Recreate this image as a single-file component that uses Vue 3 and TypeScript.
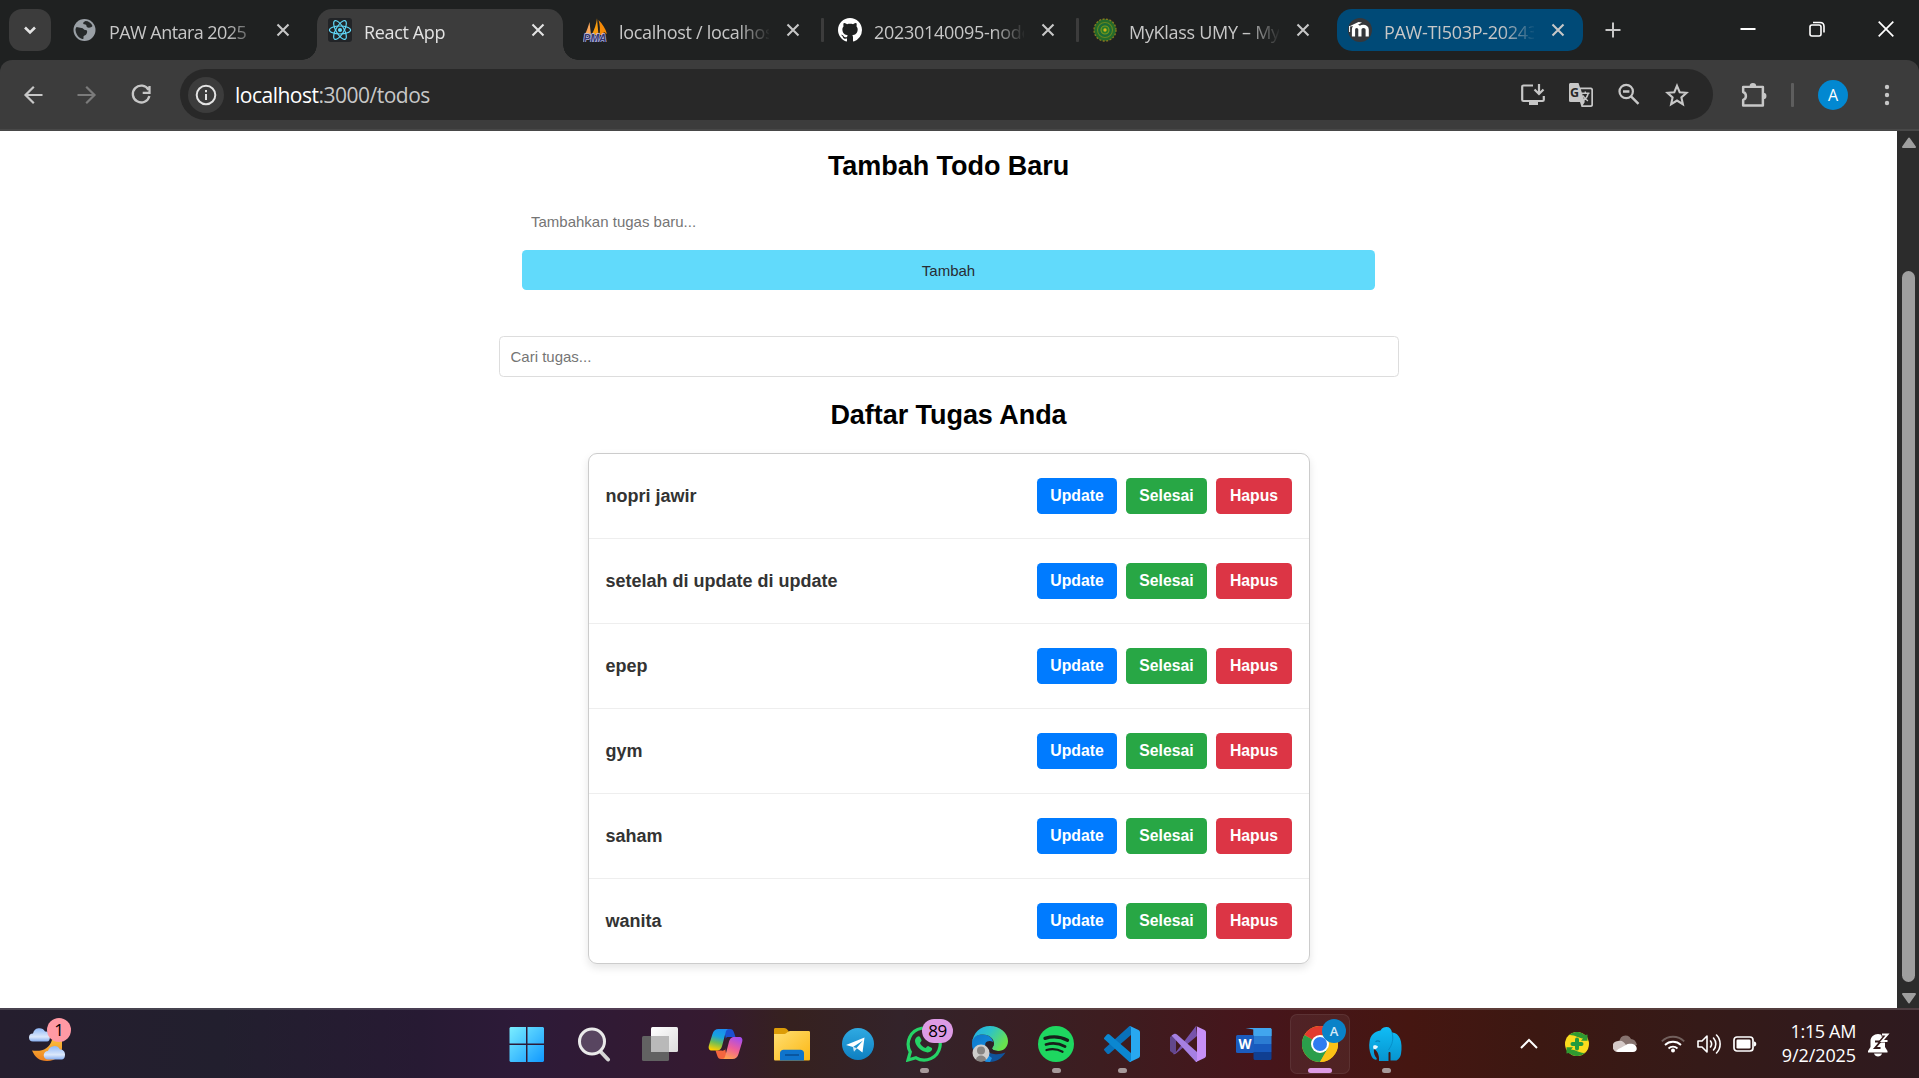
<script setup lang="ts">
import { ref } from 'vue'

interface Todo {
  id: number
  task: string
}

interface Tab {
  id: string
  title: string
  state: 'idle' | 'active' | 'grouped'
  divider: boolean
  spacing: number
}

const tabs: Tab[] = [
  { id: 'globe', title: 'PAW Antara 2025', state: 'idle', divider: false, spacing: -0.55 },
  { id: 'react', title: 'React App', state: 'active', divider: false, spacing: -0.35 },
  { id: 'pma', title: 'localhost / localhost', state: 'idle', divider: true, spacing: -0.3 },
  { id: 'github', title: '20230140095-node-js', state: 'idle', divider: true, spacing: -0.3 },
  { id: 'umy', title: 'MyKlass UMY – MyKlass', state: 'idle', divider: false, spacing: -0.3 },
  { id: 'moodle', title: 'PAW-TI503P-20243', state: 'grouped', divider: false, spacing: -0.3 },
]

const todos = ref<Todo[]>([
  { id: 1, task: 'nopri jawir' },
  { id: 2, task: 'setelah di update di update' },
  { id: 3, task: 'epep' },
  { id: 4, task: 'gym' },
  { id: 5, task: 'saham' },
  { id: 6, task: 'wanita' },
])

const newTask = ref('')
const search = ref('')
</script>

<template>
  <div class="screen">
    <header class="tabstrip">
      <button class="tab-search">
        <svg width="14" height="14" viewBox="0 0 14 14"><path d="M2 4.5 7 9.5 12 4.5" fill="none" stroke="#e3e3e3" stroke-width="2.6" /></svg>
      </button>
      <div class="tabs">
        <div v-for="t in tabs" :key="t.id" class="tab" :class="[t.state, { divider: t.divider }]">
          <svg v-if="t.id === 'globe'" class="fav" viewBox="0 0 24 24">
            <circle cx="11.500" cy="12" r="11" fill="#9aa0a6" />
            <path d="M3.500 9c2 0 3 1 5 1s2 2 4 2 2 2 1 4-3 1-3 3 0 2-1 2C5.500 20 2.500 16 2.500 11zM12.500 3c-2 1-3 2-2 3s3 0 3 2 3 2 5 1l1-1c-1-3-4-5-7-5z" fill="#26292a" />
          </svg>
          <svg v-else-if="t.id === 'react'" class="fav" viewBox="0 0 24 24">
            <rect width="24" height="24" rx="3" fill="#222427" />
            <g fill="none" stroke="#61dafb" stroke-width="1.15">
              <ellipse cx="12" cy="12" rx="10.6" ry="4" />
              <ellipse cx="12" cy="12" rx="10.6" ry="4" transform="rotate(60 12 12)" />
              <ellipse cx="12" cy="12" rx="10.6" ry="4" transform="rotate(120 12 12)" />
            </g>
            <circle cx="12" cy="12" r="2.1" fill="#61dafb" />
          </svg>
          <svg v-else-if="t.id === 'pma'" class="fav" viewBox="0 0 24 24">
            <path d="M1.500 17C4 12.500 5.500 8 6.500 4L8 17z" fill="#f9a65a" />
            <path d="M8.500 17C11.500 12 13.300 6 14 .3L15.500 17z" fill="#f89c0e" />
            <path d="M15.500 2c4 4 7 8.500 8.500 14l-3-2-1.500 3h-3c.8-5 .5-10-1-15z" fill="#f58a07" />
            <text x="12" y="24" text-anchor="middle" font-family="Liberation Sans" font-size="10.500" font-weight="700" font-style="italic" fill="#35366e" stroke="#b9bbe4" stroke-width="1.400" paint-order="stroke" textLength="23" lengthAdjust="spacingAndGlyphs">PMA</text>
          </svg>
          <svg v-else-if="t.id === 'github'" class="fav" viewBox="0 0 16 16">
            <path fill="#fff" d="M8 0C3.580 0 0 3.580 0 8c0 3.540 2.290 6.530 5.470 7.590.4.070.55-.17.55-.38 0-.19-.01-.82-.01-1.490-2.010.37-2.530-.49-2.690-.94-.09-.23-.48-.94-.82-1.130-.28-.15-.68-.52-.01-.53.63-.01 1.080.58 1.230.82.72 1.210 1.870.87 2.330.66.07-.52.28-.87.51-1.070-1.780-.2-3.640-.89-3.640-3.950 0-.87.31-1.590.82-2.150-.08-.2-.36-1.020.08-2.120 0 0 .67-.21 2.200.82.64-.18 1.320-.27 2-.27s1.360.09 2 .27c1.530-1.040 2.200-.82 2.200-.82.44 1.100.16 1.920.08 2.120.51.56.82 1.270.82 2.150 0 3.070-1.870 3.750-3.650 3.950.29.25.54.73.54 1.480 0 1.070-.01 1.930-.01 2.200 0 .21.15.46.55.38A8.010 8.010 0 0 0 16 8c0-4.420-3.580-8-8-8z" />
          </svg>
          <svg v-else-if="t.id === 'umy'" class="fav" viewBox="0 0 24 24">
            <circle cx="12" cy="12" r="11" fill="#256b2a" stroke="#8a7a1e" stroke-width="1.300" stroke-dasharray="2 1.500" />
            <circle cx="12" cy="12" r="7.500" fill="#1c6a36" stroke="#66861f" stroke-width="1.100" />
            <circle cx="12" cy="12" r="4" fill="#267c28" stroke="#7c981c" stroke-width="1.100" />
            <circle cx="12" cy="12" r="1.700" fill="#d1b51c" />
          </svg>
          <svg v-else class="fav" viewBox="0 0 24 24">
            <circle cx="12" cy="12" r="12" fill="#35373b" />
            <path d="M5.500 18.500V11.500c0-2 1.200-3.200 3.100-3.200s3.300 1.200 3.300 3.200v7M11.900 18.500v-7c0-2 1.500-3.200 3.500-3.200s3.800 1.200 3.800 3.200v7" fill="none" stroke="#fff" stroke-width="3.200" />
            <path d="M1 8.500 10.500 4 14 4.500 8 8z" fill="#fff" />
            <path d="M1.600 8v6" stroke="#fff" stroke-width="1" />
          </svg>
          <span class="tab-title" :style="{ letterSpacing: t.spacing + 'px' }">{{ t.title }}</span>
          <svg class="tab-close" viewBox="0 0 14 14"><path d="m1.500 1.500 11 11m0-11-11 11" stroke="currentColor" stroke-width="2.100" /></svg>
        </div>
      </div>
      <svg class="new-tab" viewBox="0 0 16 16"><path d="M8 .5v15M.5 8h15" stroke="#c7c7c7" stroke-width="2" /></svg>
      <div class="window-controls">
        <svg width="16" height="16" viewBox="0 0 16 16"><path d="M.5 8h15" stroke="#fff" stroke-width="2" /></svg>
        <svg width="16" height="16" viewBox="0 0 16 16"><g fill="none" stroke="#fff" stroke-width="1.600"><rect x="1" y="4" width="11" height="11" rx="2" /><path d="M4 1.500h7c2.500 0 4 1.500 4 4v6" /></g></svg>
        <svg width="16" height="16" viewBox="0 0 16 16"><path d="m.7.7 14.600 14.600m0-14.600L.7 15.300" stroke="#fff" stroke-width="1.700" /></svg>
      </div>
    </header>

    <div class="toolbar-wrap">
      <nav class="toolbar">
        <div class="nav-buttons">
          <svg viewBox="0 0 24 24"><path d="M21.500 12H4.500m8.300-8.300L4.500 12l8.300 8.300" fill="none" stroke="#c7c7c7" stroke-width="2.200" /></svg>
          <svg viewBox="0 0 24 24"><path d="M2.500 12h17m-8.300-8.300 8.300 8.300-8.300 8.300" fill="none" stroke="#7b7b7b" stroke-width="2.200" /></svg>
          <svg viewBox="0 0 24 24"><path d="M19.500 6.800A8.400 8.400 0 1 0 20.400 13M20.500 3v6.800h-6.800" fill="none" stroke="#c7c7c7" stroke-width="2.300" /></svg>
        </div>
        <div class="omnibox">
          <span class="site-info">
            <svg width="22" height="22" viewBox="0 0 22 22"><circle cx="11" cy="11" r="9.300" fill="none" stroke="#e3e3e3" stroke-width="2" /><path d="M11 10v6M11 6v2.200" stroke="#e3e3e3" stroke-width="2" /></svg>
          </span>
          <span class="url"><b>localhost</b>:3000/todos</span>
          <div class="page-actions">
            <svg viewBox="0 0 24 24"><path d="M12 2.500H2.500c-.8 0-1.300.5-1.300 1.300v12.900c0 .8.500 1.300 1.300 1.300h19c.8 0 1.300-.5 1.300-1.300V13" fill="none" stroke="#c7c7c7" stroke-width="2.200" /><path d="M8 18h9v4H8z" fill="#c7c7c7" /><path d="M18 1v9.500M13.500 6.500 18 11l4.500-4.500" fill="none" stroke="#c7c7c7" stroke-width="2.200" /></svg>
            <svg viewBox="0 0 24 24"><path d="M1.500 0h8l1.500 4.500h11c1 0 2 1 2 2v15.500c0 1-1 2-2 2h-9.500L11 19H1.500A1.500 1.500 0 0 1 0 17.500v-16C0 .7.700 0 1.500 0z" fill="#c7c7c7" /><path d="M11.800 6.200h9.700c.5 0 .8.300.8.800v14.500c0 .5-.3.800-.8.800h-7.700l2-3.300z" fill="#282828" /><text x="1" y="14.300" font-family="Open Sans" font-size="12.500" font-weight="700" fill="#282828">G</text><path d="M12.500 10.300h8M16.300 8.500v1.800M19.200 10.500c-.7 3-2.500 5.500-5 7.300M14 12.500c1 2.600 2.800 4.300 5 5.300" fill="none" stroke="#c7c7c7" stroke-width="1.400" /></svg>
            <svg viewBox="0 0 24 24"><circle cx="9.200" cy="8.500" r="6.700" fill="none" stroke="#c7c7c7" stroke-width="2.200" /><path d="M6 8.500h6.400M14 13.300l7.500 7.500" stroke="#c7c7c7" stroke-width="2.400" /></svg>
            <svg viewBox="0 0 24 24"><path d="m12 2.800 2.700 6.400 6.900.6-5.200 4.600 1.500 6.800-5.900-3.600-5.900 3.600 1.500-6.800-5.200-4.600 6.900-.6z" fill="none" stroke="#c7c7c7" stroke-width="2.100" /></svg>
          </div>
        </div>
        <svg class="extensions" viewBox="0 0 24 24"><path d="M2 4.500h18.200v5.200l0 5.300v6.700H2v-5.200a3.900 3.900 0 0 0 0-7.300z" fill="none" stroke="#c7c7c7" stroke-width="2.300" stroke-linejoin="round" /><path d="M8 4a3 3 0 0 1 6 0zM20.500 10a3 3 0 0 1 0 6z" fill="#c7c7c7" /></svg>
        <span class="bar-divider"></span>
        <span class="profile">A</span>
        <svg class="menu" viewBox="0 0 6 24"><g fill="#c7c7c7"><circle cx="3" cy="4" r="2.200" /><circle cx="3" cy="12" r="2.200" /><circle cx="3" cy="20" r="2.200" /></g></svg>
      </nav>
    </div>

    <div class="viewport">
      <main class="page">
        <h2>Tambah Todo Baru</h2>
        <form class="add-form" @submit.prevent>
          <input v-model="newTask" type="text" placeholder="Tambahkan tugas baru..." />
          <button type="submit">Tambah</button>
        </form>
        <input v-model="search" class="search" type="text" placeholder="Cari tugas..." />
        <h2>Daftar Tugas Anda</h2>
        <ul class="todo-list">
          <li v-for="todo in todos" :key="todo.id">
            <span>{{ todo.task }}</span>
            <div class="actions">
              <button class="update">Update</button>
              <button class="done">Selesai</button>
              <button class="delete">Hapus</button>
            </div>
          </li>
        </ul>
      </main>
      <aside class="scrollbar">
        <svg width="16" height="12" viewBox="0 0 16 12"><path d="M8 1.500 14 10H2z" fill="#9f9f9f" stroke="#9f9f9f" stroke-width="2" stroke-linejoin="round" /></svg>
        <div class="thumb"></div>
        <svg width="16" height="12" viewBox="0 0 16 12"><path d="M8 10.500 14 2H2z" fill="#9f9f9f" stroke="#9f9f9f" stroke-width="2" stroke-linejoin="round" /></svg>
      </aside>
    </div>

    <footer class="taskbar">
      <div class="widgets">
        <svg width="40" height="36" viewBox="0 0 40 36">
          <defs>
            <linearGradient id="moon" x1="0" y1="0" x2="0" y2="1"><stop offset="0" stop-color="#fbbd3b" /><stop offset="1" stop-color="#ee8120" /></linearGradient>
            <linearGradient id="cloud" x1="0" y1="0" x2="0" y2="1"><stop offset="0" stop-color="#8fb9f8" /><stop offset=".65" stop-color="#dce8fb" /><stop offset="1" stop-color="#86aef0" /></linearGradient>
          </defs>
          <path d="M33 14v8c0 7-6 13-15 13-8 0-12-4-15-10.500C13 26 20 23 23 14z" fill="url(#moon)" />
          <path d="M4 15.500a4 4 0 0 1 0-8 6.500 6.500 0 0 1 12-2c3 0 5 2 5 5s-1 5-3 5z" fill="url(#cloud)" />
          <path d="M19 33.500a4.300 4.300 0 0 1 0-8.600 6.500 6.500 0 0 1 12-1.400c3 0 5 2 5 5s-1 5-4 5z" fill="url(#cloud)" />
        </svg>
        <span class="badge pink">1</span>
      </div>

      <div class="apps">
        <div class="app start">
          <svg viewBox="0 0 36 36">
            <defs><linearGradient id="win" gradientUnits="userSpaceOnUse" x1="0" y1="0" x2="36" y2="36"><stop offset="0" stop-color="#7df0ff" /><stop offset="1" stop-color="#0f97ff" /></linearGradient></defs>
            <path d="M1.500 1H17v16.500H.5V2zM18.500 1H34l1 1v15.500H18.500zM.5 19H17v17H1.500l-1-1zM18.500 19H35v16l-1 1H18.500z" fill="url(#win)" />
          </svg>
        </div>
        <div class="app">
          <svg viewBox="0 0 36 36"><path d="m24 25 8 8.500" stroke="#d6d6d6" stroke-width="4" stroke-linecap="round" /><circle cx="16" cy="15.500" r="12.500" fill="#584560" stroke="#eaeaea" stroke-width="3" /></svg>
        </div>
        <div class="app">
          <svg viewBox="0 0 36 36">
            <defs><linearGradient id="tv" x1="0" y1="0" x2="1" y2="1"><stop offset="0" stop-color="#fff" /><stop offset="1" stop-color="#dcdcdc" /></linearGradient></defs>
            <rect x="0" y="10" width="27" height="25" rx="1.500" fill="#626262" />
            <rect x="9" y="1" width="27" height="25" rx="1.500" fill="url(#tv)" />
            <path d="M9 10h18v16H9z" fill="#b9b9b9" />
          </svg>
        </div>
        <div class="app">
          <svg viewBox="0 0 36 36">
            <defs>
              <linearGradient id="cpA" x1=".6" y1="0" x2=".35" y2="1"><stop offset="0" stop-color="#1b8df0" /><stop offset=".35" stop-color="#17a3e0" /><stop offset=".65" stop-color="#6bbd59" /><stop offset="1" stop-color="#ffd000" /></linearGradient>
              <linearGradient id="cpB" x1=".7" y1="0" x2=".3" y2="1"><stop offset="0" stop-color="#a64dee" /><stop offset=".5" stop-color="#ee5e9a" /><stop offset="1" stop-color="#ffa14f" /></linearGradient>
            </defs>
            <path d="M16 3h6c2 0 3.300 1 4 3.500L27.500 11H22c-3 0-3 0-4 3z" fill="#1b50d0" />
            <path d="M19 33h-6c-2 0-3-1-4-4l-1.500-4.500H13c3 0 3 0 4-3z" fill="#f4663f" />
            <path d="M10.500 3H21c-2 0-2.800 1-3.500 4l-3.300 12.500c-1 4-2.700 5-5.700 5H4c-3 0-4-2-3-5.500L4.500 8c1-3.500 3-5 6-5z" fill="url(#cpA)" />
            <path d="M24.500 33H14c2 0 2.800-1 3.500-4l3.300-12.500c1-4 2.700-5.500 5.700-5.500H31c3 0 4 2 3 5.500L30.500 28c-1 3.500-3 5-6 5z" fill="url(#cpB)" />
            <path d="M19.500 11H22c-1.700 1-2.300 3-2.800 5l-1.700 6.500c-.3 1.300-1 2-2.500 2h-1.500c1.500-1 2-2.500 2.500-4.500l1.500-6c.4-1.700 1-3 2-3z" fill="#33202e" />
          </svg>
        </div>
        <div class="app">
          <svg viewBox="0 0 36 36">
            <defs><linearGradient id="fold" x1="0" y1="0" x2="1" y2="1"><stop offset="0" stop-color="#ffdf72" /><stop offset="1" stop-color="#fbb714" /></linearGradient></defs>
            <path d="M0 3.500C0 2.500.5 2 1.500 2H10c2 0 3 1 4.500 3v4H0z" fill="#dc9c07" />
            <path d="M0 8h9c2 0 3-.5 4-1.500 1-1 2-1.500 3-1.500h18.500c1 0 1.500.5 1.500 1.500v26.500c0 1-.5 1.500-1.500 1.500h-33C.5 34.500 0 34 0 33z" fill="url(#fold)" />
            <path d="M6 34.500v-7.500c0-2 1.500-3.300 3.500-3.300h17c2 0 3.500 1.300 3.500 3.300v7.500z" fill="#0f74cc" /><path d="M11 29h14" stroke="#084f95" stroke-width="1.600" />
          </svg>
        </div>
        <div class="app">
          <svg viewBox="0 0 36 36">
            <defs><linearGradient id="tg" x1="0" y1="0" x2="0" y2="1"><stop offset="0" stop-color="#2faae2" /><stop offset="1" stop-color="#0e7fc1" /></linearGradient></defs>
            <circle cx="18" cy="18" r="16" fill="url(#tg)" />
            <path d="M6 19 24.500 11.500 22.500 26.500l-6-4.500 6.500-7.500-10 6.500z" fill="#fff" /><path d="m12.800 20.800 1.200 5 3-3.500z" fill="#d2e8f4" />
          </svg>
        </div>
        <div class="app running">
          <svg viewBox="0 0 36 36">
            <path d="M2 34 4.300 26A16 16 0 1 1 10 31.800z" fill="none" stroke="#25d366" stroke-width="3.200" />
            <path d="M11 11c1-1 2.500-1 3 0l1.500 3c.4 1-1 2-1.500 3 1 2.500 3 4 5.500 5 1-.6 2-2.300 3-1.800l3 1.600c1 .7.700 2-.2 3-2 2-4.300 2-7.300.8-4.500-2-8.500-6-9-10.600-.1-1.600.8-3 2-4z" fill="#25d366" />
          </svg>
          <span class="badge lilac">89</span>
        </div>
        <div class="app">
          <svg viewBox="0 0 36 36">
            <defs>
              <linearGradient id="edgeTop" x1="0" y1="0" x2="1" y2=".5"><stop offset="0" stop-color="#1daaf0" /><stop offset=".5" stop-color="#2fc3c5" /><stop offset="1" stop-color="#68e34e" /></linearGradient>
              <linearGradient id="edgeBody" x1="0" y1="0" x2=".5" y2="1"><stop offset="0" stop-color="#0c78c9" /><stop offset="1" stop-color="#1a8fe3" /></linearGradient>
            </defs>
            <path d="M12 14c-1 8 3 13 10 14 4 .5 7 0 11.500-1.500-4 6-9 9.500-15.500 9.500C8 36 0 28 0 17z" fill="#10539b" />
            <path d="M0 17C0 11 5 8.500 11 8.500c6 0 10 4 10 8l-2 3c-1-2-3-3-5-2.500-2 5 1 12 6 15l-2 4C8 36 0 28 0 17z" fill="url(#edgeBody)" />
            <path d="M0 17C1 7 8 0 18 0s18 7 18 15c0 6-4 10-10 10-4 0-6-1-6-2.500 0-1 2-2 2-5 0-5-5-9-11-9S1 11 0 17z" fill="url(#edgeTop)" />
            <path d="M13.500 17c1-2 5-3 7.500-1 1.500 2.500 0 4.500-1 6 0 1.500 2 2.500 6 3-4 2.500-8 1-10-1-2-2-3-4.500-2.500-7z" fill="#2c2028" />
            <circle cx="9" cy="27" r="8.500" fill="#cfcdcb" /><circle cx="9" cy="24.500" r="4" fill="#888583" /><path d="M4 34c0-6 10-6 10 0-3 2-7 2-10 0z" fill="#888583" />
          </svg>
        </div>
        <div class="app running">
          <svg viewBox="0 0 36 36"><circle cx="18" cy="18" r="18" fill="#1ed760" /><g fill="none" stroke="#171f1a" stroke-linecap="round"><path d="M7 12.300c8-2.300 16-1.500 22.500 2" stroke-width="3.300" /><path d="M8 18.500c6.500-1.800 13.500-1 19 2" stroke-width="2.800" /><path d="M8.500 24c5.500-1.400 11.300-.8 16 1.700" stroke-width="2.300" /></g></svg>
        </div>
        <div class="app running">
          <svg viewBox="0 0 36 36"><path d="m0 24 3 3.500c.8.700 1.700.7 2.500 0L27 9V0h-1.500L.7 22.500c-.7.500-.7 1-.7 1.500z" fill="#0971ba" /><path d="m0 12 3-3.500c.8-.7 1.700-.7 2.500 0L27 27v9h-1.500L.7 13.500c-.7-.5-.7-1-.7-1.500z" fill="#0b87d1" /><path d="m26 0 8.500 4c1 .5 1.500 1.200 1.500 2.500v23c0 1.300-.5 2-1.500 2.500L26 36c-.6 0 1-1 1-2.500v-31C27 1 26.600 0 26 0z" fill="#28a8f0" /></svg>
        </div>
        <div class="app">
          <svg viewBox="0 0 36 36"><path d="M0 11 4 8.500 6 10v16l-2 2-4-3z" fill="#62478c" /><path d="m3 28 3-2L26 0l1 10L6 27.500c-1 .9-2 1-3 .5z" fill="#7652ac" /><path d="M1.500 9.500 4 8c1-.5 2-.3 3 .5l20 17.500v10h-1z" fill="#a680e2" /><path d="m26 0 8.500 4c1 .5 1.500 1.200 1.500 2.500v23c0 1.300-.5 2-1.500 2.500L26 36c-.6 0 1-1 1-2.500v-31C27 1 26.600 0 26 0z" fill="#c790f7" /></svg>
        </div>
        <div class="app">
          <svg viewBox="0 0 36 36"><path d="M9.500 2H34c.8 0 1.500.7 1.500 1.500V10H17.500V3.500z" fill="#41a5ee" /><path d="M17.500 3.500V10h18V3.500c0-.8-.7-1.500-1.500-1.500H19c-.8 0-1.500.7-1.500 1.500z" fill="#41a5ee" /><path d="M17.500 10h18v8h-18z" fill="#2b7cd3" /><path d="M17.500 18h18v8h-18z" fill="#185abd" /><path d="M17.500 26h18v6.500c0 .8-.7 1.500-1.500 1.500H19c-.8 0-1.500-.7-1.500-1.500z" fill="#103f91" /><rect x="0" y="9" width="18" height="18" rx="1.500" fill="#1b5cbe" /><text x="9" y="23" text-anchor="middle" font-family="Open Sans" font-weight="700" font-size="13.500" fill="#fff">W</text></svg>
        </div>
        <div class="app current">
          <svg viewBox="0 0 36 36"><circle cx="18" cy="18" r="18" fill="#fbc116" /><path d="M18 18 2.400 9A18 18 0 0 1 33.600 9z" fill="#e33b2e" /><path d="M18 18 2.400 9A18 18 0 0 0 18 36l7.800-13.500z" fill="#2b9e4b" /><path d="M18 9h15.600A18 18 0 0 1 18 36l7.800-13.500z" fill="#fbc116" /><circle cx="18" cy="18" r="9" fill="#fff" /><circle cx="18" cy="18" r="7" fill="#2f7cf0" /></svg>
          <span class="badge account">A</span>
        </div>
        <div class="app running">
          <svg viewBox="0 0 36 36">
            <defs><linearGradient id="ele" x1="0" y1="0" x2="0" y2="1"><stop offset="0" stop-color="#10bdf6" /><stop offset="1" stop-color="#0794cf" /></linearGradient></defs>
            <path d="M12.500 4.500C14 1.500 16 1 18.500 1c3 0 5 2 5.500 5.500 4 .3 6.500 2.500 8 6 1.700 4 2 10 1 15.500-.5 2.800-2 5-4.500 6.500H22.500v-7.500c0-1.200-2-1.200-2 0V35H11c.3-3-.3-6-1.500-8.500-1-2-2.500-2.800-3.500-4.500-.3 3.500 0 6.500 1.300 8.500 1.200 1.300 2 2.500 1.200 3-2 .8-4.200-1.200-5.500-4.500C1.300 24.500.8 20 1.500 16 2.300 9 6.500 5.300 12.500 4.500z" fill="url(#ele)" />
            <path d="M24 6.500c1.800 6 .5 12-3.500 17.500" fill="none" stroke="#0690ca" stroke-width="1" />
            <path d="M7.500 16c1.200-1.500 3.300-1.500 4.500 0" fill="none" stroke="#0783b8" stroke-width="1.100" />
            <path d="M5.500 19.500c1.800-.7 3.500-.2 4.500 1.200-1 1.800-2.300 2.600-4.200 2.600-.8-1.300-.9-2.600-.3-3.800z" fill="#e8f8ff" />
          </svg>
        </div>
      </div>

      <div class="tray">
        <svg viewBox="0 0 24 24"><path d="m4 16 8-8 8 8" fill="none" stroke="#fff" stroke-width="2" /></svg>
        <svg viewBox="0 0 24 24"><circle cx="12" cy="12" r="12" fill="#fbdc1e" /><path d="M3.800 3.200A12 12 0 0 1 20 3l2.500-.5v6.300H16l2-2.300C13.500 6.500 9.500 2.500 3.800 3.200zM20.200 20.800A12 12 0 0 1 4 21l-2.500.5v-6.300H8l-2 2.300c4.500 0 8.500 4 14.200 3.300z" fill="#2f9a31" /><path d="M12 7.500v9M7.500 12h9" stroke="#239b3e" stroke-width="4" stroke-linecap="round" /></svg>
        <svg viewBox="0 0 24 24"><path d="M7 12a6 6 0 0 1 11-5c3 0 5 2 6 6l-8 2z" fill="#87736f" /><path d="M5 20a5 5 0 0 1 0-11c4-1 6 1 8 4l7 7z" fill="#d4c9c7" /><path d="M3 19c3-3 7-4 10-6 3-2 7-1 9 0 3 3 2 7-2 7H5z" fill="#fff" /></svg>
        <svg viewBox="0 0 24 24"><g fill="none" stroke="#fff" stroke-width="1.800"><path d="M.8 9.300a16 16 0 0 1 22.400 0" stroke="#72605d" /><path d="M4 13a11.500 11.500 0 0 1 16 0M7.500 16.500a6.500 6.500 0 0 1 9 0" /></g><circle cx="12" cy="18.500" r="2" fill="#fff" /></svg>
        <svg viewBox="0 0 24 24"><g fill="none" stroke="#fff" stroke-width="1.600" stroke-linecap="round" stroke-linejoin="round"><path d="M1 9h4l5-5v16l-5-5H1zM13.500 9a5 5 0 0 1 0 6M16.500 6a9 9 0 0 1 0 12M19.500 3a13 13 0 0 1 0 18" /></g></svg>
        <svg viewBox="0 0 24 24"><rect x="1" y="5" width="19" height="14" rx="3" fill="none" stroke="#fff" stroke-width="1.700" /><rect x="3.500" y="7.500" width="14" height="9" rx="1.300" fill="#fff" /><path d="M21 9.500c3 0 3 5 0 5z" fill="#fff" /></svg>
        <div class="clock"><span>1:15 AM</span><span class="date">9/2/2025</span></div>
        <svg viewBox="0 0 24 24"><path d="M12 1C8 1 4.500 4 4.500 8v6L2 18v1.500h19.500V18L19 14V8c0-4-3-7-7-7z" fill="#fff" /><path d="M8 20.500h8c-1 4-7 4-8 0z" fill="#fff" /><path d="M9 8.500h5.500l-5.500 6.500h5.500" fill="none" stroke="#33191a" stroke-width="1.900" /><path d="M15.500 1.500H21L16 7.500h5" fill="none" stroke="#33191a" stroke-width="4" /><path d="M16 1.500h5.500L16 8h5.500" fill="none" stroke="#fff" stroke-width="1.900" /></svg>
      </div>
    </footer>
  </div>
</template>

<style>
body {
  margin: 0;
  background: #fff;
}
</style>

<style scoped>
.screen {
  width: 1919px;
  height: 1078px;
  display: flex;
  flex-direction: column;
  overflow: hidden;
  font-family: "Open Sans", "Noto Sans", sans-serif;
}
svg {
  display: block;
  flex: none;
}
button {
  border: 0;
  padding: 0;
}

/* Tab strip */
.tabstrip {
  height: 60px;
  box-sizing: border-box;
  padding: 9px 25px 0 9px;
  background: #1f2121;
  display: flex;
}
.tab-search {
  width: 42px;
  height: 42px;
  border-radius: 13px;
  background: #3c3c3c;
  display: grid;
  place-items: center;
}
.tabs {
  display: flex;
  gap: 9px;
  margin-left: 11px;
}
.tab {
  position: relative;
  width: 246px;
  height: 42px;
  box-sizing: border-box;
  padding: 0 18px 0 11px;
  display: flex;
  align-items: center;
  color: #c7c7c7;
}
.fav {
  width: 24px;
  height: 24px;
}
.tab-title {
  width: 151px;
  margin-left: 12px;
  font-size: 18px;
  line-height: 26px;
  margin-top: 3px;
  white-space: nowrap;
  overflow: hidden;
  mask-image: linear-gradient(90deg, #000 118px, transparent 152px);
}
.tab-close {
  width: 14px;
  height: 14px;
  margin-left: 17px;
}
.tab.active {
  height: 51px;
  padding-bottom: 9px;
  background: #3c3c3c;
  color: #e3e3e3;
  border-radius: 15px 15px 0 0;
}
.tab.active::before,
.tab.active::after {
  content: "";
  position: absolute;
  bottom: 0;
  width: 15px;
  height: 15px;
}
.tab.active::before {
  left: -15px;
  background: radial-gradient(circle at 0 0, transparent 14.5px, #3c3c3c 15px);
}
.tab.active::after {
  right: -15px;
  background: radial-gradient(circle at 100% 0, transparent 14.5px, #3c3c3c 15px);
}
.tab.grouped {
  background: #004a77;
  border-radius: 15px;
}
.tab.divider::after {
  content: "";
  position: absolute;
  right: -6px;
  top: 9px;
  width: 3px;
  height: 24px;
  border-radius: 1px;
  background: #3c3c3c;
}
.new-tab {
  width: 16px;
  height: 16px;
  margin: 13px 0 0 22px;
}
.window-controls {
  margin-left: auto;
  padding-top: 12px;
  display: flex;
  gap: 53px;
}

/* Toolbar */
.toolbar-wrap {
  background: #1f2121;
}
.toolbar {
  height: 71px;
  box-sizing: border-box;
  padding: 0 29px 0 21px;
  background: #3c3c3c;
  border-bottom: 2px solid #484848;
  border-radius: 12px 12px 0 0;
  display: flex;
  align-items: center;
}
.nav-buttons {
  display: flex;
  gap: 30px;
}
.nav-buttons svg {
  width: 24px;
  height: 24px;
}
.omnibox {
  width: 1533px;
  height: 51px;
  box-sizing: border-box;
  margin-left: 27px;
  padding: 0 24px 0 8px;
  border-radius: 26px;
  background: #282828;
  display: flex;
  align-items: center;
}
.site-info {
  width: 36px;
  height: 36px;
  border-radius: 50%;
  background: #3c3c3c;
  display: grid;
  place-items: center;
}
.url {
  margin-left: 11px;
  font-size: 21px;
  line-height: 30px;
  letter-spacing: -0.5px;
  color: #c7c7c7;
}
.url b {
  font-weight: 400;
  color: #fff;
}
.page-actions {
  margin-left: auto;
  display: flex;
  gap: 24px;
}
.page-actions svg {
  width: 24px;
  height: 24px;
}
.extensions {
  width: 26px;
  height: 26px;
  margin-left: 28px;
}
.bar-divider {
  width: 3px;
  height: 24px;
  margin-left: 24px;
  border-radius: 1px;
  background: #5e5e5e;
}
.profile {
  width: 30px;
  height: 30px;
  margin-left: 24px;
  border-radius: 50%;
  background: #0288d1;
  color: #fff;
  font-size: 16px;
  line-height: 30px;
  text-align: center;
}
.menu {
  width: 6px;
  height: 24px;
  margin-left: 36px;
}

/* Page */
.viewport {
  height: 877px;
  display: flex;
  background: #fff;
}
.page {
  flex: 1;
  padding-top: 20px;
  display: flex;
  flex-direction: column;
  align-items: center;
  font-family: "Liberation Sans", Arial, sans-serif;
}
.page input,
.page button {
  font-family: inherit;
}
h2 {
  margin: 0;
  font-size: 27px;
  line-height: 31px;
  letter-spacing: -0.05px;
  color: #000;
}
.add-form {
  width: 853px;
  margin-top: 20px;
  display: flex;
  flex-direction: column;
  gap: 8px;
}
.page input {
  box-sizing: border-box;
  font-size: 15px;
  outline: 0;
  background: #fff;
}
.add-form input {
  height: 40px;
  padding: 0 9px 2px;
  border: 0;
}
.page input::placeholder {
  color: #757575;
}
.add-form button {
  height: 40px;
  border-radius: 4.5px;
  background: #61dafb;
  color: #282c34;
  font-size: 15px;
}
.search {
  width: 900px;
  height: 41px;
  margin: 46px 0 23px;
  padding: 0 11px;
  border: 1px solid #ddd;
  border-radius: 4.5px;
}
.todo-list {
  width: 722px;
  box-sizing: border-box;
  margin: 22px 0 0;
  padding: 0;
  list-style: none;
  border: 1px solid #ccc;
  border-radius: 9px;
  box-shadow: 0 4px 9px rgba(0, 0, 0, 0.1);
}
.todo-list li {
  height: 84px;
  padding: 0 17px;
  display: flex;
  align-items: center;
  justify-content: space-between;
  font-size: 18px;
  font-weight: 700;
  color: #333;
}
.todo-list li + li {
  border-top: 1px solid #eee;
}
.actions {
  display: flex;
  gap: 9px;
}
.actions button {
  height: 36px;
  border-radius: 4.5px;
  color: #fff;
  font-size: 15.75px;
  font-weight: 700;
  padding: 0 0 1px 1px;
}
.update {
  width: 80px;
  background: #007bff;
}
.done {
  width: 81px;
  background: #28a745;
}
.delete {
  width: 76px;
  background: #dc3545;
}
.scrollbar {
  width: 22px;
  box-sizing: border-box;
  padding: 6px 0 4px 1px;
  background: #2c2c2c;
  display: flex;
  flex-direction: column;
  align-items: center;
}
.thumb {
  width: 13px;
  height: 711px;
  margin: 122px 0 auto;
  border-radius: 7px;
  background: #9f9f9f;
}

/* Taskbar */
.taskbar {
  height: 70px;
  box-sizing: border-box;
  border-top: 2px solid rgba(255, 255, 255, 0.16);
  display: flex;
  background: linear-gradient(90deg, #251e2e 0, #221f2e 220px, #271a33 420px, #2d1a38 520px, #351a30 710px, #36211f 790px, #33232a 900px, #3d1d20 1100px, #46151b 1260px, #451611 1410px, #3c1812 1540px, #351a18 1700px, #2e1a1f 1919px) border-box;
}
.widgets {
  position: relative;
  width: 466px;
  padding: 16px 0 0 29px;
}
.badge {
  position: absolute;
  height: 24px;
  border-radius: 12px;
  color: #000;
  font-size: 17px;
  line-height: 24px;
  text-align: center;
}
.badge.pink {
  left: 47px;
  top: 8px;
  width: 24px;
  background: #ff99a4;
}
.apps {
  display: flex;
}
.app {
  position: relative;
  width: 66px;
  padding-top: 16px;
  height: 52px;
}
.app svg {
  position: relative;
  width: 36px;
  height: 36px;
  margin: 0 auto;
}
.app.start svg {
  margin-left: 13.5px;
}
.app.running::after,
.app.current::after {
  content: "";
  position: absolute;
  left: 28.5px;
  top: 58px;
  width: 9px;
  height: 5px;
  border-radius: 3px;
  background: #a79a9b;
}
.app.current::after {
  left: 21px;
  width: 24px;
  background: #dd9be5;
}
.app.current::before {
  content: "";
  position: absolute;
  left: 3px;
  top: 4px;
  width: 58px;
  height: 58px;
  border: 1px solid rgba(255, 255, 255, 0.07);
  border-radius: 7px;
  background: rgba(255, 255, 255, 0.06);
}
.badge.lilac {
  left: 31px;
  top: 9px;
  width: 31px;
  background: #dd9be5;
  letter-spacing: -0.5px;
}
.badge.account {
  left: 35px;
  top: 9px;
  width: 24px;
  background: #0a82c8;
  color: #d5eaf7;
  font-size: 13px;
  font-weight: 600;
}
.tray {
  margin-left: auto;
  padding-right: 29px;
  display: flex;
  align-items: center;
}
.tray > svg {
  width: 24px;
  height: 24px;
  margin-right: 24px;
}
.tray > svg:nth-child(n + 4) {
  margin-right: 12px;
}
.tray > svg:last-child {
  margin: 2px 0 0 10px;
}
.clock {
  width: 87px;
  display: flex;
  flex-direction: column;
  align-items: flex-end;
  color: #fff;
  font-size: 18px;
  line-height: 24px;
  letter-spacing: -0.35px;
  padding-bottom: 2px;
  white-space: nowrap;
}
.date {
  letter-spacing: -0.1px;
}
</style>
